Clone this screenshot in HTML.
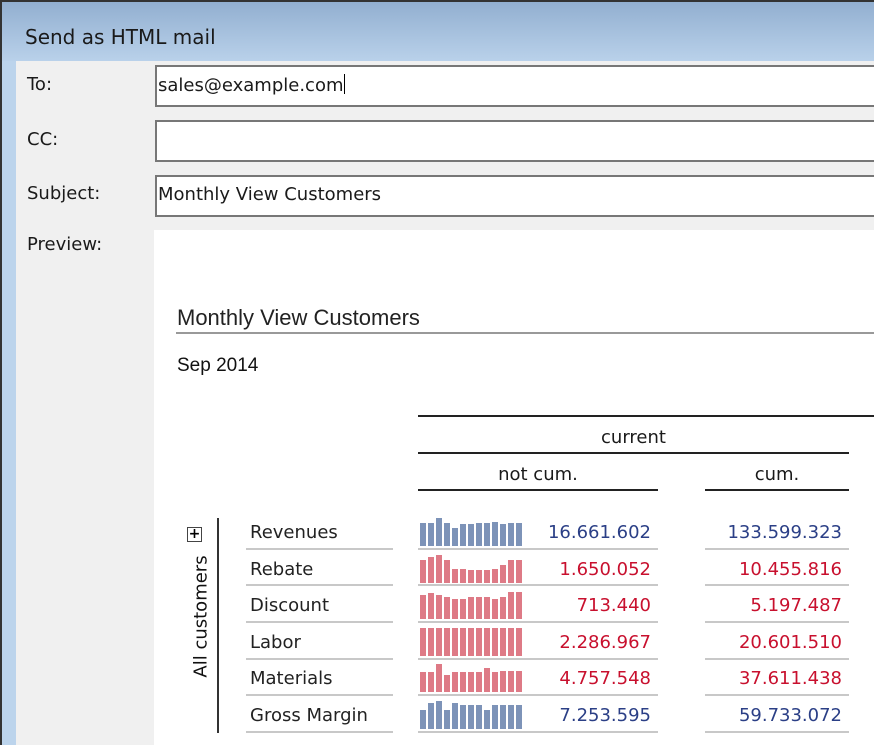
<!DOCTYPE html>
<html><head><meta charset="utf-8"><style>
*{margin:0;padding:0;box-sizing:border-box}
body{width:874px;height:745px;overflow:hidden;background:#f0f0f0;font-family:Tahoma,"DejaVu Sans","Liberation Sans",sans-serif;position:relative}
.a{position:absolute}
.lbl{font-size:18px;color:#1a1a1a}
.inp{position:absolute;left:155px;width:725px;background:#fff;border:2px solid #777;border-right:none}
.t{font-family:"Liberation Sans",sans-serif;font-size:19px;color:#111}
.hl{position:absolute;height:2px;background:#222}
.sep{position:absolute;height:2px;background:#c8c8c8}
.bars{position:absolute;left:420px;display:flex;align-items:flex-end;height:30px}
.bars i{display:block;width:6px;margin-right:2px}
.b i{background:#7d93b8}.r i{background:#de7a86}
.num{position:absolute;font-size:18px;text-align:right;width:150px}
.nb{color:#2b3f86}.nr{color:#c8102e}
.rl{position:absolute;left:250px;font-size:18px;color:#222}
</style></head><body>
<div class="a" style="left:0;top:0;width:874px;height:2px;background:#333"></div>
<div class="a" style="left:0;top:0;width:2px;height:745px;background:#333"></div>
<div class="a" style="left:2px;top:2px;width:872px;height:59px;background:linear-gradient(#92afd0,#b9d1ea)"></div>
<div class="a" style="left:2px;top:61px;width:14px;height:684px;background:#bcd4ec"></div>
<div class="a lbl" style="left:25px;top:25px;font-size:20px">Send as HTML mail</div>
<div class="a lbl" style="left:27px;top:74px">To:</div>
<div class="a lbl" style="left:27px;top:129px">CC:</div>
<div class="a lbl" style="left:27px;top:183px">Subject:</div>
<div class="a lbl" style="left:27px;top:234px">Preview:</div>
<div class="inp" style="top:65px;height:42px"><span class="a lbl" style="left:1px;top:7px">sales@example.com<span style="display:inline-block;width:1px;height:20px;background:#000;vertical-align:-3px"></span></span></div>
<div class="inp" style="top:120px;height:42px"></div>
<div class="inp" style="top:175px;height:42px"><span class="a lbl" style="left:1px;top:7px">Monthly View Customers</span></div>
<div class="a" style="left:154px;top:230px;width:720px;height:515px;background:#fff"></div>
<div class="a t" style="left:177px;top:305px;font-size:22px;color:#222">Monthly View Customers</div>
<div class="a" style="left:176px;top:332px;width:698px;height:2px;background:#999"></div>
<div class="a t" style="left:177px;top:355px">Sep 2014</div>
<div class="hl" style="left:418px;top:415px;width:456px"></div>
<div class="a lbl" style="left:418px;top:427px;width:431px;text-align:center">current</div>
<div class="hl" style="left:418px;top:452px;width:431px"></div>
<div class="a lbl" style="left:418px;top:464px;width:240px;text-align:center">not cum.</div>
<div class="a lbl" style="left:705px;top:464px;width:144px;text-align:center">cum.</div>
<div class="hl" style="left:418px;top:489px;width:240px"></div>
<div class="hl" style="left:705px;top:489px;width:144px"></div>
<div class="a" style="left:217px;top:518px;width:2px;height:215px;background:#333"></div>
<div class="a" style="left:187px;top:527px;width:15px;height:15px;border:1px solid #444;font-size:14px;line-height:12px;text-align:center;color:#000;font-weight:bold">+</div>
<div class="a lbl" style="left:101px;top:606px;width:200px;text-align:center;transform:rotate(-90deg);transform-origin:center;color:#111">All customers</div>

<div class="rl" style="top:522px">Revenues</div>
<div class="bars b" style="top:516px"><i style="height:23px"></i><i style="height:23px"></i><i style="height:28px"></i><i style="height:23px"></i><i style="height:18px"></i><i style="height:22px"></i><i style="height:22px"></i><i style="height:23px"></i><i style="height:23px"></i><i style="height:24px"></i><i style="height:22px"></i><i style="height:23px"></i><i style="height:23px"></i></div>
<div class="num nb" style="left:501px;top:522px">16.661.602</div>
<div class="num nb" style="left:692px;top:522px">133.599.323</div>

<div class="rl" style="top:559px">Rebate</div>
<div class="bars r" style="top:553px"><i style="height:23px"></i><i style="height:26px"></i><i style="height:28px"></i><i style="height:23px"></i><i style="height:14px"></i><i style="height:14px"></i><i style="height:13px"></i><i style="height:13px"></i><i style="height:13px"></i><i style="height:14px"></i><i style="height:18px"></i><i style="height:23px"></i><i style="height:23px"></i></div>
<div class="num nr" style="left:501px;top:559px">1.650.052</div>
<div class="num nr" style="left:692px;top:559px">10.455.816</div>

<div class="rl" style="top:595px">Discount</div>
<div class="bars r" style="top:589px"><i style="height:24px"></i><i style="height:26px"></i><i style="height:24px"></i><i style="height:22px"></i><i style="height:20px"></i><i style="height:20px"></i><i style="height:22px"></i><i style="height:22px"></i><i style="height:22px"></i><i style="height:20px"></i><i style="height:22px"></i><i style="height:27px"></i><i style="height:27px"></i></div>
<div class="num nr" style="left:501px;top:595px">713.440</div>
<div class="num nr" style="left:692px;top:595px">5.197.487</div>

<div class="rl" style="top:632px">Labor</div>
<div class="bars r" style="top:626px"><i style="height:28px"></i><i style="height:28px"></i><i style="height:28px"></i><i style="height:28px"></i><i style="height:28px"></i><i style="height:28px"></i><i style="height:28px"></i><i style="height:28px"></i><i style="height:28px"></i><i style="height:28px"></i><i style="height:28px"></i><i style="height:28px"></i><i style="height:28px"></i></div>
<div class="num nr" style="left:501px;top:632px">2.286.967</div>
<div class="num nr" style="left:692px;top:632px">20.601.510</div>

<div class="rl" style="top:668px">Materials</div>
<div class="bars r" style="top:662px"><i style="height:20px"></i><i style="height:20px"></i><i style="height:28px"></i><i style="height:17px"></i><i style="height:20px"></i><i style="height:20px"></i><i style="height:20px"></i><i style="height:20px"></i><i style="height:24px"></i><i style="height:20px"></i><i style="height:21px"></i><i style="height:21px"></i><i style="height:21px"></i></div>
<div class="num nr" style="left:501px;top:668px">4.757.548</div>
<div class="num nr" style="left:692px;top:668px">37.611.438</div>

<div class="rl" style="top:705px">Gross Margin</div>
<div class="bars b" style="top:699px"><i style="height:19px"></i><i style="height:26px"></i><i style="height:28px"></i><i style="height:19px"></i><i style="height:26px"></i><i style="height:24px"></i><i style="height:24px"></i><i style="height:24px"></i><i style="height:19px"></i><i style="height:24px"></i><i style="height:24px"></i><i style="height:24px"></i><i style="height:24px"></i></div>
<div class="num nb" style="left:501px;top:705px">7.253.595</div>
<div class="num nb" style="left:692px;top:705px">59.733.072</div>

<div class="sep" style="left:246px;top:548px;width:147px"></div><div class="sep" style="left:418px;top:548px;width:240px"></div><div class="sep" style="left:705px;top:548px;width:144px"></div>
<div class="sep" style="left:246px;top:584px;width:147px"></div><div class="sep" style="left:418px;top:584px;width:240px"></div><div class="sep" style="left:705px;top:584px;width:144px"></div>
<div class="sep" style="left:246px;top:621px;width:147px"></div><div class="sep" style="left:418px;top:621px;width:240px"></div><div class="sep" style="left:705px;top:621px;width:144px"></div>
<div class="sep" style="left:246px;top:658px;width:147px"></div><div class="sep" style="left:418px;top:658px;width:240px"></div><div class="sep" style="left:705px;top:658px;width:144px"></div>
<div class="sep" style="left:246px;top:694px;width:147px"></div><div class="sep" style="left:418px;top:694px;width:240px"></div><div class="sep" style="left:705px;top:694px;width:144px"></div>
<div class="sep" style="left:246px;top:731px;width:147px"></div><div class="sep" style="left:418px;top:731px;width:240px"></div><div class="sep" style="left:705px;top:731px;width:144px"></div>
</body></html>
